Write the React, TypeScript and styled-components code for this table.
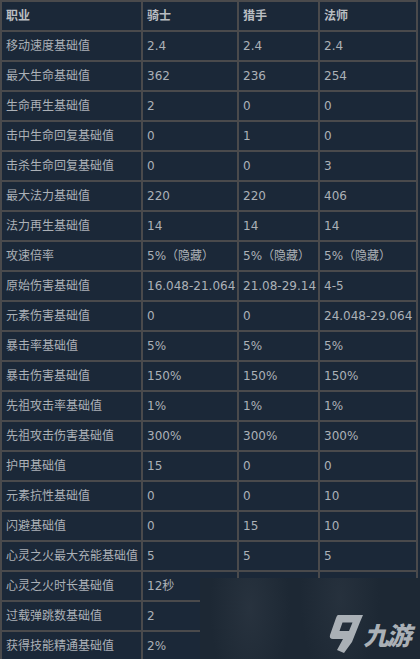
import styled, { createGlobalStyle } from 'styled-components';

const GlobalStyle = createGlobalStyle`
  html, body {
    margin: 0;
    padding: 0;
    background: #1b2838;
  }
  body {
    width: 420px;
    height: 659px;
    overflow: hidden;
  }
`

const Page = styled.div`
  position: relative;
  width: 420px;
  height: 659px;
  overflow: hidden;
  background: #1b2838;
  font-family: "DejaVu Sans", "Noto Sans CJK SC", sans-serif;
`

const StatGrid = styled.div`
  display: grid;
  grid-template-columns: 139px 94px 79px 96px;
  grid-auto-rows: 28px;
  gap: 2px;
  padding: 2px;
  width: max-content;
  background: #4a4a4c;
`

const Cell = styled.div<{ $head?: boolean }>`
  background: #1b2838;
  color: ${p => p.$head ? '#b9bdc2' : '#acb1b7'};
  font-size: 12px;
  font-weight: ${p => p.$head ? 700 : 400};
  line-height: 28px;
  padding-left: 4px;
  white-space: nowrap;
  overflow: hidden;
`

const Watermark = styled.div`
  position: absolute;
  left: 200px;
  top: 578px;
  width: 220px;
  height: 81px;
  background:
    radial-gradient(ellipse 40px 90px at 50px 30px, rgba(60, 70, 82, 0.35), transparent),
    radial-gradient(ellipse 40px 90px at 140px 20px, rgba(60, 70, 82, 0.3), transparent),
    #1d2834;
`

const Logo = styled.div`
  position: absolute;
  left: 129px;
  top: 36px;
  display: flex;
  align-items: flex-end;
  gap: 2px;
`

const LogoText = styled.span`
  color: #aab0b6;
  font-family: "Noto Sans CJK SC", sans-serif;
  font-size: 25px;
  font-weight: 900;
  line-height: 25px;
  margin-bottom: 6px;
  transform: skewX(-14deg);
  letter-spacing: -2px;
`

const rows: string[][] = [
  ['职业', '骑士', '猎手', '法师'],
  ['移动速度基础值', '2.4', '2.4', '2.4'],
  ['最大生命基础值', '362', '236', '254'],
  ['生命再生基础值', '2', '0', '0'],
  ['击中生命回复基础值', '0', '1', '0'],
  ['击杀生命回复基础值', '0', '0', '3'],
  ['最大法力基础值', '220', '220', '406'],
  ['法力再生基础值', '14', '14', '14'],
  ['攻速倍率', '5%（隐藏）', '5%（隐藏）', '5%（隐藏）'],
  ['原始伤害基础值', '16.048-21.064', '21.08-29.14', '4-5'],
  ['元素伤害基础值', '0', '0', '24.048-29.064'],
  ['暴击率基础值', '5%', '5%', '5%'],
  ['暴击伤害基础值', '150%', '150%', '150%'],
  ['先祖攻击率基础值', '1%', '1%', '1%'],
  ['先祖攻击伤害基础值', '300%', '300%', '300%'],
  ['护甲基础值', '15', '0', '0'],
  ['元素抗性基础值', '0', '0', '10'],
  ['闪避基础值', '0', '15', '10'],
  ['心灵之火最大充能基础值', '5', '5', '5'],
  ['心灵之火时长基础值', '12秒', '12秒', '12秒'],
  ['过载弹跳数基础值', '2', '2', '2'],
  ['获得技能精通基础值', '2%', '2%', '2%'],
]

function App() {
  return (
    <Page>
      <GlobalStyle />
      <StatGrid>
        {rows.map((row, r) =>
          row.map((val, c) => (
            <Cell key={r + '-' + c} $head={r === 0}>{val}</Cell>
          ))
        )}
      </StatGrid>
      <Watermark>
        <Logo>
          <svg width="35" height="39" viewBox="0 0 35 39">
            {/* angular "9" mark */}
            <path
              d="M9 1 L34 1 L31 8 L23 28 L15 39 L8 36 L14 25 L4 25 Q0 25 1 21 L7 4 Q8 1 9 1 Z M13.5 8.5 L10.5 17 L20 17 L23.5 8.5 Z"
              fill="#aab0b6"
              fillRule="evenodd"
            />
          </svg>
          <LogoText>九游</LogoText>
        </Logo>
      </Watermark>
    </Page>
  );
}

export default App;
